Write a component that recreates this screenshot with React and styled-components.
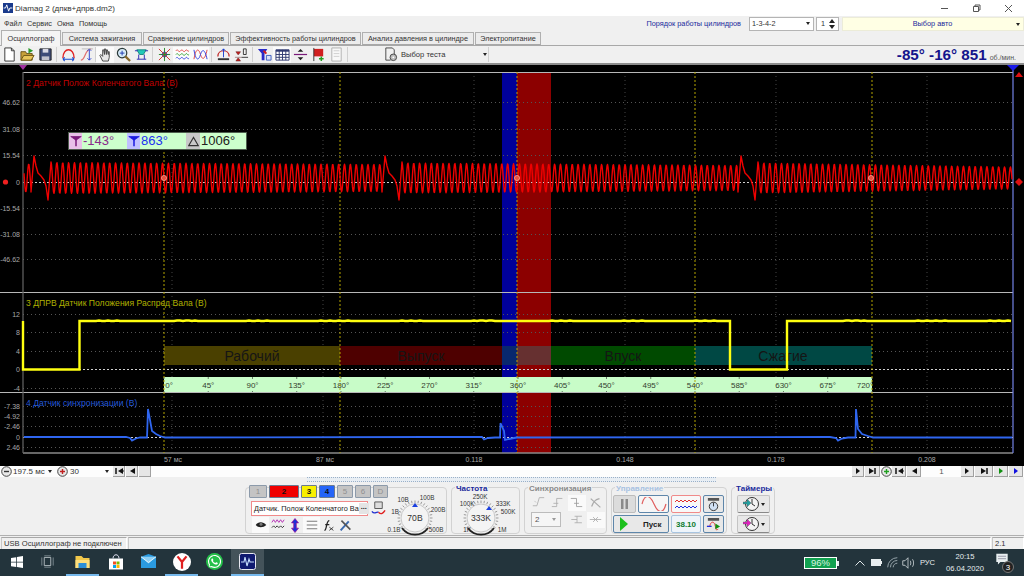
import React from 'react';
import styled, { createGlobalStyle } from 'styled-components';
import { FaWhatsapp } from 'react-icons/fa';

const GlobalStyle = createGlobalStyle`
  html, body { margin: 0; padding: 0; background: #f0f0f0; }
  body { font-family: "Liberation Sans", Arial, sans-serif; font-size: 7.3px; color: #222; overflow: hidden; }
  * { box-sizing: border-box; }
`;

// ---- waveforms ----
const GAPS = [
  { g: 34, a0: 15.5, a1: 13.5, len: 334 },
  { g: 385, a0: 15, a1: 12.5, len: 339 },
  { g: 741, a0: 15, a1: 11, len: 255 },
];

function gapShape(g) {
  return [[g - 3, 192], [g, 156], [g + 2, 166], [g + 4, 173], [g + 7, 176], [g + 10, 180], [g + 12, 186], [g + 14, 200], [g + 17, 162]];
}

function crankPath() {
  const pts = [];
  const segment = (from, to, start, a0, a1, len) => {
    for (let x = from; x <= to; x += 0.5) {
      const t = Math.min(1, Math.max(0, (x - start) / len));
      const amp = a0 + (a1 - a0) * t;
      const y = 178 - amp * Math.cos((2 * Math.PI * (x - start)) / 5.87);
      pts.push([x, y]);
    }
  };
  segment(24, 31, 34 + 17 - 351, 14, 14, 300);
  GAPS.forEach((gap, i) => {
    pts.push(...gapShape(gap.g));
    const end = i < GAPS.length - 1 ? GAPS[i + 1].g - 4 : 1012;
    segment(gap.g + 17.5, end, gap.g + 17, gap.a0, gap.a1, gap.len);
  });
  return 'M' + pts.map(([x, y]) => `${x} ${y.toFixed(1)}`).join('L');
}

function camPath() {
  const pts = [[23, 321], [23, 369.5], [79.5, 369.5], [79.5, 321]];
  const noisy = (from, to) => {
    for (let x = from; x < to; x += 3) {
      pts.push([x, 321 + (Math.sin(x * 1.7) * Math.sin(x * 0.31) > 0.6 ? -0.5 : 0)]);
    }
  };
  noisy(81, 729);
  pts.push([730, 321], [730, 369.5], [787, 369.5], [787, 321]);
  noisy(789, 1012);
  return 'M' + pts.map(([x, y]) => `${x} ${y}`).join('L');
}

const SYNC_PATH =
  'M24 437L126 437L130 438L132 440.5L136 438.5L140 437.5L147 437.5L148 409L150 420L152 431L156 434L160 436L165 437.5' +
  'L428 437L482 437L484 439.5L488 438L495 437.5L500 437.5L500.5 423L504 431L505 440L509 439L514 438L517 437.5' +
  'L830 437L836 438L838 440.5L842 438.5L848 437.5L855.5 437.5L856 409L858 429L862 434L868 436L873 437.5L1012 437.5';

const PHASES = [
  { x: 164, w: 176, c: '#4a4000', label: 'Рабочий', tx: 252 },
  { x: 340, w: 162, c: '#4e0000', label: 'Выпуск', tx: 421 },
  { x: 502, w: 15, c: '#08286e', label: '' },
  { x: 517, w: 34, c: '#663030', label: '' },
  { x: 551, w: 144, c: '#004a00', label: 'Впуск', tx: 623 },
  { x: 695, w: 177, c: '#004844', label: 'Сжатие', tx: 783 },
];

const Y_LABELS = [
  [102, '46.62'], [129, '31.08'], [155, '15.54'], [182, '0'], [208, '-15.54'], [234, '-31.08'], [259, '-46.62'],
  [314, '12'], [332, '8'], [351, '4'], [369, '0'], [388, '-4'],
  [406, '-7.38'], [416, '-4.92'], [426, '-2.46'], [437, '0'], [447, '2.46'],
];
const DIM_H = [102, 129, 155, 208, 234, 259, 314, 332, 351, 388, 406, 416, 426, 447];
const ZERO_H = [182, 369, 437];
const GRID_V = [172, 323, 474, 625, 776, 927];
const TIME_LABELS = [[173, '57 мс'], [325, '87 мс'], [474, '0.118'], [625, '0.148'], [776, '0.178'], [927, '0.208']];
const CURSORS = [164, 340, 517, 695, 872];
const DEGREES = Array.from({ length: 17 }, (_, i) => i * 45);

// ---- layout ----
const Page = styled.div`
  width: 1024px;
  height: 576px;
  display: flex;
  flex-direction: column;
  background: #f0f0f0;
  overflow: hidden;
`;

const TitleBar = styled.div`
  height: 16px;
  background: #fff;
  display: flex;
  align-items: center;
  padding-left: 3px;
  font-size: 8.1px;
  color: #333;
  gap: 2px;
`;

const WinControls = styled.div`
  margin-left: auto;
  display: flex;
`;

const WinButton = styled.div`
  width: 32px;
  height: 16px;
  display: flex;
  align-items: center;
  justify-content: center;
`;

const MenuBar = styled.div`
  height: 15px;
  display: flex;
  align-items: center;
  padding-left: 4px;
  gap: 5px;
  color: #333;
`;

const CylLabel = styled.span`
  margin-left: auto;
  color: #1a2a9c;
  margin-right: 3px;
`;

const Combo = styled.div`
  width: ${(p) => p.$w}px;
  height: 14px;
  background: ${(p) => p.$bg || '#fff'};
  border: 1px solid ${(p) => p.$border || '#b4b4b4'};
  display: flex;
  align-items: center;
  padding: 0 3px 0 2px;
  margin-right: ${(p) => p.$mr || 0}px;
  color: ${(p) => p.$color || '#333'};
  justify-content: ${(p) => (p.$center ? 'center' : 'space-between')};
  position: relative;
`;

const Caret = styled.i`
  width: 0;
  height: 0;
  border-left: 2.5px solid transparent;
  border-right: 2.5px solid transparent;
  border-top: 3px solid #222;
`;

const ComboCaret = styled(Caret)`
  position: absolute;
  right: 3px;
  top: 5px;
`;

const Tabs = styled.div`
  height: 15px;
  display: flex;
  align-items: flex-end;
  padding-left: 1px;
  gap: 1px;
  border-bottom: 1px solid #a8a8a8;
`;

const Tab = styled.div`
  width: ${(p) => p.$w}px;
  height: ${(p) => (p.$active ? 16 : 13)}px;
  margin-bottom: ${(p) => (p.$active ? -1 : 0)}px;
  background: ${(p) => (p.$active ? '#f4f4f4' : '#ececec')};
  border: 1px solid #b0b0b0;
  border-bottom: ${(p) => (p.$active ? 'none' : '1px solid #a8a8a8')};
  display: flex;
  align-items: center;
  justify-content: center;
  color: #333;
  white-space: nowrap;
`;

const Toolbar = styled.div`
  height: 19px;
  display: flex;
  align-items: center;
  background: #f0f0f0;
  border-bottom: 2px solid #8c8c8c;
`;

const ToolBtn = styled.div`
  width: 18px;
  height: 16px;
  display: flex;
  align-items: center;
  justify-content: center;
  background: ${(p) => (p.$on ? '#fbfbfb' : 'transparent')};
`;

const ToolSep = styled.div`
  width: ${(p) => p.$w || 5}px;
  height: 15px;
  display: flex;
  justify-content: center;
  &::after { content: ''; width: 1px; background: #d0d0d0; }
`;

const TestPicker = styled.div`
  width: 138px;
  height: 16px;
  display: flex;
  align-items: center;
  padding-left: 33px;
  gap: 3px;
  color: #333;
  font-size: 7.6px;
  white-space: nowrap;
  ${Caret} { margin-left: 35px; }
`;

const Rpm = styled.div`
  margin-left: auto;
  padding-right: 8px;
  display: flex;
  align-items: baseline;
  color: #14148c;
  font-weight: bold;
  font-size: 15.2px;
  white-space: pre;
`;

const RpmUnit = styled.span`
  font-size: 7px;
  font-weight: normal;
  color: #555;
  margin-left: 3px;
`;

const Scope = styled.div`
  height: 401px;
  background: #000;
  position: relative;
  flex: none;
`;

const ScopeSvg = styled.svg`
  display: block;
`;

const AxisText = styled.text`
  font-family: "Liberation Sans", Arial, sans-serif;
  font-size: 7px;
  fill: #a8a8a8;
`;

const ChannelTitle = styled.text`
  font-family: "Liberation Sans", Arial, sans-serif;
  font-size: 8.6px;
  fill: ${(p) => p.$c};
`;

const PhaseText = styled.text`
  font-family: "Liberation Sans", Arial, sans-serif;
  font-size: 14px;
  fill: #151515;
  text-anchor: middle;
`;

const RulerText = styled.text`
  font-family: "Liberation Sans", Arial, sans-serif;
  font-size: 8px;
  fill: #33402f;
  text-anchor: middle;
`;

const Readout = styled.div`
  position: absolute;
  left: 68px;
  top: 67px;
  width: 179px;
  height: 18px;
  background: #ccffcc;
  border: 1px solid #4e5e4e;
  display: flex;
  font-size: 13px;
`;

const ReadIcon = styled.div`
  width: ${(p) => p.$w}px;
  background: ${(p) => p.$bg};
  display: flex;
  align-items: center;
  justify-content: center;
  flex: none;
`;

const ReadValue = styled.div`
  width: ${(p) => p.$w}px;
  color: ${(p) => p.$c};
  line-height: 16px;
  padding-left: 1px;
  flex: none;
`;

const NavRow = styled.div`
  height: 11px;
  background: #fdfdfd;
  display: flex;
  align-items: center;
  font-size: 8px;
  color: #333;
  flex: none;
`;

const NavField = styled.div`
  width: ${(p) => p.$w}px;
  display: flex;
  align-items: center;
  justify-content: space-between;
  padding: 0 4px 0 1px;
  white-space: nowrap;
`;

const NavBtn = styled.div`
  width: ${(p) => p.$w || 12}px;
  height: 11px;
  background: #e6e6e6;
  border-right: 1px solid #a0a0a0;
  border-bottom: 1px solid #a0a0a0;
  display: flex;
  align-items: center;
  justify-content: center;
  margin-right: 1px;
`;

const NavCircle = styled.div`
  width: ${(p) => p.$w || 12}px;
  display: flex;
  align-items: center;
  justify-content: center;
`;

const PageNo = styled.div`
  width: 39px;
  text-align: center;
  color: #555;
`;

const Push = styled.div`
  margin-left: auto;
`;

const Splitter = styled.div`
  height: 4px;
  flex: none;
  padding-left: 307px;
  &::after {
    content: '';
    display: block;
    width: 409px;
    height: 3px;
    background: #e8eef4;
    border: 1px dotted #9ab0c8;
    border-width: 1px 0;
  }
`;

const Panel = styled.div`
  height: 55px;
  flex: none;
  display: flex;
  gap: 4px;
  padding: 6px 0 1px 245px;
  border-bottom: 1px solid #b0b0b0;
`;

const Group = styled.div`
  width: ${(p) => p.$w}px;
  border: 1px solid #d2d2d2;
  border-radius: 4px;
  position: relative;
  display: flex;
`;

const GroupTitle = styled.span`
  position: absolute;
  left: 3px;
  top: -4px;
  padding: 0 1px;
  background: #f0f0f0;
  font-weight: bold;
  font-size: 8px;
  line-height: 9px;
  color: ${(p) => p.$c};
  white-space: nowrap;
`;

const ChanColumn = styled.div`
  width: 143px;
  padding-left: 3px;
  margin-top: -3px;
  display: flex;
  flex-direction: column;
  flex: none;
`;

const ChanRow = styled.div`
  display: flex;
  gap: 2px;
  height: 13px;
`;

const ChanBtn = styled.div`
  width: ${(p) => p.$w}px;
  height: 13px;
  background: ${(p) => p.$bg || '#c4c4c4'};
  border: 1px solid ${(p) => (p.$bg ? '#6a7a90' : '#8c9aaa')};
  border-radius: 1px;
  color: ${(p) => (p.$bg ? '#101010' : '#909090')};
  font-weight: ${(p) => (p.$bg ? 'bold' : 'normal')};
  display: flex;
  align-items: center;
  justify-content: center;
  font-size: 8px;
`;

const SensorRow = styled.div`
  display: flex;
  align-items: center;
  height: 15px;
  margin: 3px 0 1px 2px;
  gap: 3px;
`;

const SensorInput = styled.div`
  width: 117px;
  height: 15px;
  background: #fff;
  border: 1px solid #f08a8a;
  display: flex;
  align-items: center;
  justify-content: space-between;
  padding-left: 2px;
  font-size: 7.3px;
  color: #222;
  white-space: nowrap;
`;

const DotsBtn = styled.div`
  width: 10px;
  height: 11px;
  margin-right: 1px;
  background: #e4e4e4;
  line-height: 7px;
  text-align: center;
  font-weight: bold;
  flex: none;
`;

const IconRow = styled.div`
  display: flex;
  align-items: center;
  height: 16px;
  padding-left: 3px;
`;

const SmallBtn = styled.div`
  width: ${(p) => p.$w || 17}px;
  height: 16px;
  display: flex;
  align-items: center;
  justify-content: center;
  background: ${(p) => (p.$on ? '#fafafa' : 'transparent')};
`;

const KnobSvg = styled.svg`
  margin-left: ${(p) => p.$ml || 0}px;
  display: block;
  flex: none;
  overflow: visible;
`;

const KnobLabel = styled.text`
  font-family: "Liberation Sans", Arial, sans-serif;
  font-size: 6.3px;
  fill: #333;
  text-anchor: middle;
`;

const KnobCenter = styled(KnobLabel)`
  font-size: 8.6px;
`;

const SyncGrid = styled.div`
  display: grid;
  grid-template-columns: repeat(4, 19px);
  grid-template-rows: 17px 17px;
  padding: 6px 0 0 4px;
  align-items: center;
  justify-items: center;
`;

const SyncSelect = styled.div`
  grid-column: span 2;
  justify-self: start;
  margin-left: 2px;
  width: 30px;
  height: 15px;
  background: #f6f6f6;
  border: 1px solid #bcbcbc;
  display: flex;
  align-items: center;
  justify-content: space-between;
  padding: 0 4px 0 3px;
  font-size: 8px;
  color: #555;
  ${Caret} { border-top-color: #999; }
`;

const CtlGrid = styled.div`
  display: grid;
  grid-template-columns: 23px 31px 30px 21px;
  grid-template-rows: 18px 18px;
  column-gap: 2px;
  row-gap: 2px;
  padding: 7px 0 0 1px;
`;

const CtlBtn = styled.div`
  grid-column: ${(p) => p.$span || 'auto'};
  background: ${(p) => p.$bg || '#e8e8e8'};
  border: ${(p) => p.$bw || 1}px solid ${(p) => p.$border || '#bcbcbc'};
  border-radius: 2px;
  display: flex;
  align-items: center;
  justify-content: center;
  font-weight: ${(p) => (p.$bold ? 'bold' : 'normal')};
  font-size: 8px;
  color: ${(p) => p.$c || '#222'};
  overflow: hidden;
`;

const StartBtn = styled(CtlBtn)`
  justify-content: flex-start;
  padding-left: 5px;
  gap: 14px;
`;

const TimerColumn = styled.div`
  display: flex;
  flex-direction: column;
  gap: 2px;
  padding: 7px 0 0 5px;
`;

const TimerBtn = styled.div`
  width: 33px;
  height: 18px;
  background: #e8e8e8;
  border: 1px solid #c4c4c4;
  border-bottom-color: #888;
  border-radius: 2px;
  display: flex;
  align-items: center;
  justify-content: center;
  gap: 2px;
`;

const StatusBar = styled.div`
  height: 12px;
  flex: none;
  display: flex;
  gap: 1px;
  padding: 0 0 0 1px;
  font-size: 7.6px;
  margin-top: 1px;
  color: #333;
`;

const StatusCell = styled.div`
  width: ${(p) => p.$w}px;
  border-top: 1px solid #a8a8a8;
  border-left: 1px solid #c8c8c8;
  border-right: 1px solid #fff;
  padding-left: 2px;
  line-height: 11px;
  white-space: nowrap;
`;

const Taskbar = styled.div`
  height: 27px;
  flex: none;
  background: #23343c;
  display: flex;
  align-items: stretch;
  color: #e8eef0;
  font-size: 7.6px;
`;

const TaskItem = styled.div`
  width: 33px;
  flex: none;
  display: flex;
  align-items: center;
  justify-content: center;
  background: ${(p) => (p.$active ? '#44535a' : 'transparent')};
  border-bottom: 2px solid ${(p) => (p.$mark ? '#76b9ed' : 'transparent')};
  margin-left: ${(p) => p.$ml || 0}px;
`;

const WhatsappIcon = styled(FaWhatsapp)`
  background: #25c04a;
  border-radius: 50%;
  padding: 1px;
`;

const TrayGroup = styled.div`
  margin-left: auto;
  margin-right: 7px;
  display: flex;
  align-items: center;
`;

const BatteryBadge = styled.div`
  width: 33px;
  height: 12px;
  background: #12a150;
  border: 1px solid #fff;
  color: #d8f4e2;
  font-size: 9.5px;
  line-height: 10px;
  text-align: center;
  position: relative;
  margin-right: 15px;
  &::after {
    content: '';
    position: absolute;
    right: -3px;
    top: 3px;
    width: 2px;
    height: 5px;
    background: #e8eef0;
  }
`;

const TrayIcon = styled.div`
  width: 16px;
  display: flex;
  justify-content: center;
`;

const Lang = styled.div`
  width: 17px;
  margin: 0 8px 0 3px;
  text-align: center;
  white-space: nowrap;
`;

const Clock = styled.div`
  width: 42px;
  text-align: center;
  line-height: 12px;
`;

const Notify = styled.div`
  width: 30px;
  margin-left: 1px;
  position: relative;
  height: 20px;
  display: flex;
  justify-content: center;
`;

const NotifyCount = styled.span`
  position: absolute;
  right: 3px;
  top: 8px;
  width: 12px;
  height: 12px;
  line-height: 11px;
  border-radius: 50%;
  background: #222;
  border: 1px solid #777;
  color: #fff;
  text-align: center;
  font-size: 8px;
`;

// ---- drawings ----
const Ico = ({ w = 15, h = 15, vb = '0 0 16 16', children }) => (
  <svg width={w} height={h} viewBox={vb} fill="none">{children}</svg>
);

const TOOL_ICONS = {
  doc: <><path d="M3 1h7l3 3v11H3z" fill="#fff" stroke="#333" /><path d="M10 1v3h3" stroke="#333" /></>,
  open: <><path d="M1 14V5h5l1 2h6v7z" fill="#c9a23a" stroke="#6a5314" /><path d="M1 14l3-5h11l-3 5z" fill="#e8c65a" stroke="#6a5314" /><path d="M9 1l5 3-5 3z" fill="#2c9a2c" /></>,
  save: <><path d="M2 2h12v12H2z" fill="#3c4a78" stroke="#222" /><path d="M5 2h6v4H5z" fill="#d8d8e4" /><path d="M4 10h8v4H4z" fill="#c0c0cc" /></>,
  arc: <><path d="M2 12C2 0 14 0 14 12" stroke="#e02020" strokeWidth="1.5" /><path d="M2 13h12M2 13l2-2M2 13l2 2M14 13l-2-2M14 13l-2 2" stroke="#1a4fd0" strokeWidth="1.2" /></>,
  arcV: <><path d="M2 14C7 14 6 2 13 2" stroke="#e07070" strokeWidth="1.3" /><path d="M11 2v12M11 2L9 4M11 2l2 2M11 14l-2-2M11 14l2-2" stroke="#2a3fd0" /><path d="M3 2h12" stroke="#bbb" /></>,
  hand: <path d="M5 15L2 9l1-1 2 2V3l1 0 1 5V2h1l1 6V3h1l1 5V5h1v6l-1 4z" fill="#e8e8e8" stroke="#444" />,
  zoom: <><circle cx="6.5" cy="6.5" r="5" fill="#d8ecf8" stroke="#2a3a3a" strokeWidth="1.3" /><path d="M10 10l5 5" stroke="#8a6a2a" strokeWidth="2.4" /><path d="M4 6.5h5M6.5 4v5" stroke="#1c3ab0" /></>,
  teal: <><path d="M3 3h10L10 8H6z" fill="#22c8b8" stroke="#1a8a80" /><path d="M1 4h3M12 4h3M3 13h10" stroke="#2a2ab0" /><path d="M5 8v5M11 8v5" stroke="#2a2ab0" /></>,
  cross: <><path d="M2 2l12 12M14 2L2 14" stroke="#d03030" /><path d="M8 1v14" stroke="#2a8a2a" /><path d="M2 8h12" stroke="#2a8a2a" /><path d="M5 8l3-3 3 3-3 3z" stroke="#2a2a90" /></>,
  waves: <><path d="M1 4c2-3 3 3 5 0s3 3 5 0 2 2 4 0" stroke="#e04040" /><path d="M1 8c2-3 3 3 5 0s3 3 5 0 2 2 4 0" stroke="#30a030" /><path d="M1 12c2-3 3 3 5 0s3 3 5 0 2 2 4 0" stroke="#3040e0" /></>,
  loops: <><path d="M1 13C3 1 6 1 8 8s5 5 7-5" stroke="#e04040" /><path d="M1 3c2 12 5 12 7 5s5-5 7 5" stroke="#3040e0" /></>,
  auto: <><path d="M2 10C2 2 14 2 14 10" stroke="#c02020" strokeWidth="1.3" /><path d="M8 2v9M6 4l2-2 2 2" stroke="#1a3fd0" /><path d="M2 13h12" stroke="#333" strokeWidth="2" /></>,
  zero: <><path d="M1 11h7M4 8l-2-3h5l-2 3zM4 12l-2 3h5l-2-3z" fill="#c02020" stroke="#602020" strokeWidth=".5" /><path d="M8 11h7" stroke="#333" /><path d="M10 2h3v6h-3z" stroke="#333" /></>,
  filter: <><path d="M1 2h10L8 7v7H5V7z" fill="#2a2ac8" /><path d="M7 4l3 3" stroke="#d02020" strokeWidth="2" /><path d="M10 9h5v5h-5z" stroke="#4060c0" fill="#d8e0f8" /></>,
  table: <><path d="M1 3h14v11H1z" fill="#fff" stroke="#303a70" /><path d="M1 3h14v2H1z" fill="#303a70" /><path d="M4.5 3v11M8 3v11M11.5 3v11M1 8h14M1 11h14" stroke="#303a70" /></>,
  divide: <><path d="M1 8h14" stroke="#7a1a7a" strokeWidth="1.3" /><path d="M5 5h6L8 2zM5 11h6l-3 3z" fill="#222" /></>,
  flag: <><path d="M3 2h10v8H3z" fill="#d02020" /><path d="M3 1v14" stroke="#333" /><path d="M11 10v5M8.5 12.5h5" stroke="#22a022" strokeWidth="1.6" /></>,
  page: <><path d="M3 1h10v14H3z" fill="#f8f8f8" stroke="#b0b0b0" /><path d="M5 4h6M5 7h6M5 10h6" stroke="#cfcfcf" /></>,
};

const TOOLS = [
  ['doc'], ['open'], ['save'], 'sep',
  ['arc'], ['arcV'], 'thin',
  ['hand', true], ['zoom'], ['teal'], 'sep',
  ['cross'], ['waves', true], ['loops', true], 'sep',
  ['auto'], ['zero'], 'sep',
  ['filter'], ['table', true], ['divide'], ['flag'], ['page'], 'sep',
];

const TriMark = ({ c }) => (
  <Ico w={12} h={14}><path d="M1 2h14L8 7z" fill={c} stroke={c} /><path d="M8 5v10" stroke={c} strokeWidth="2" /></Ico>
);

const Nav = ({ kind, c = '#111' }) => {
  const paths = {
    first: <><path d="M2 1v6" stroke={c} strokeWidth="1.5" /><path d="M4 4l5-3v6z" fill={c} /><path d="M8 4h2" stroke={c} /></>,
    prev: <path d="M3 4l5-3v6z" fill={c} />,
    next: <path d="M3 1l4 3-4 3z" fill={c} />,
    last: <><path d="M2 1l5 3-5 3z" fill={c} /><path d="M8 1v6" stroke={c} strokeWidth="1.5" /></>,
  };
  return <svg width="10" height="8" viewBox="0 0 10 8">{paths[kind]}</svg>;
};

const PlusMinus = ({ plus, c }) => (
  <svg width="11" height="11" viewBox="0 0 11 11">
    <circle cx="5.5" cy="5.5" r="4.8" fill="#e8e8e8" stroke="#444" />
    <path d={plus ? 'M3 5.5h5M5.5 3v5' : 'M3 5.5h5'} stroke={c} strokeWidth="1.4" />
  </svg>
);

function Knob({ labels, center, marker, cx, width, ml }) {
  const cy = 30;
  const ticks = Array.from({ length: 25 }, (_, i) => {
    const a = ((135 + i * 11.25) * Math.PI) / 180;
    return (
      <path key={i} d={`M${cx + 15 * Math.cos(a)} ${cy + 15 * Math.sin(a)}L${cx + 17.5 * Math.cos(a)} ${cy + 17.5 * Math.sin(a)}`} stroke="#9a9a9a" />
    );
  });
  const m = (marker * Math.PI) / 180;
  const mx = cx + 12 * Math.cos(m);
  const my = cy + 12 * Math.sin(m);
  return (
    <KnobSvg $ml={ml} width={width} height={47} viewBox={`0 0 ${width} 47`}>
      {ticks}
      <circle cx={cx} cy={cy} r="14" fill="#f4f4f4" stroke="#c8c8c8" />
      <path d={`M${cx - 13} ${cy + 10}A16 16 0 0 0 ${cx + 13} ${cy + 10}`} fill="none" stroke="#222" strokeWidth="1.8" />
      <path d={`M${mx} ${my - 3}l3 4h-6z`} fill="#1a3fe0" />
      {labels.map(([x, y, t]) => (
        <KnobLabel key={t} x={x} y={y}>{t}</KnobLabel>
      ))}
      <KnobCenter x={cx} y={cy + 3}>{center}</KnobCenter>
    </KnobSvg>
  );
}

const Clk = ({ c }) => (
  <Ico w={16} h={16}>
    <circle cx="9" cy="8" r="6.5" fill="#f4f4f4" stroke="#333" />
    <path d="M9 8V3M9 8l3 2" stroke="#333" />
    <path d="M0 6h4V3l4 4-4 4V8H0z" fill={c} stroke="#555" strokeWidth=".4" />
  </Ico>
);

function ScopeCanvas() {
  return (
    <ScopeSvg width="1024" height="401" viewBox="0 65 1024 401">
      <rect x="502" y="72" width="15" height="381" fill="#00009a" />
      <rect x="517" y="72" width="34" height="381" fill="#8c0000" />

      {GRID_V.map((x) => <path key={x} d={`M${x} 72V453`} stroke="#444" strokeDasharray="1 3" />)}
      {DIM_H.map((y) => <path key={y} d={`M23 ${y + 0.5}H1013`} stroke="#555" strokeDasharray="1 3" />)}
      {ZERO_H.map((y) => <path key={y} d={`M23 ${y + 0.5}H1013`} stroke="#cfcfcf" strokeDasharray="2 2" />)}

      {PHASES.map((p) => <rect key={p.x} x={p.x} y="346" width={p.w} height="19" fill={p.c} />)}
      {PHASES.filter((p) => p.label).map((p) => <PhaseText key={p.x} x={p.tx} y="361">{p.label}</PhaseText>)}

      <rect x="164" y="377" width="708" height="16" fill="#c8fcc8" />
      {DEGREES.map((d) => {
        const x = 164 + d * 0.9833;
        return (
          <g key={d}>
            <path d={`M${x} 377v2M${x} 391v2`} stroke="#667a66" />
            <RulerText x={d === 0 ? x + 5 : d === 720 ? x - 7 : x} y="388">{d}°</RulerText>
          </g>
        );
      })}

      <path d="M23 72.5H1013M0 292.5H1013M0 392.5H1013" stroke="#b8b8b8" />
      <path d="M23 453H1013" stroke="#8a8a8a" strokeWidth="1.4" />
      <path d="M23 72V453" stroke="#666" strokeWidth="1.2" />
      <path d="M1013 70V453" stroke="#7484e8" strokeWidth="1.2" />

      {CURSORS.map((x) => <path key={x} d={`M${x} 72V453`} stroke="#b4a400" strokeDasharray="2 2" />)}

      <path d={crankPath()} fill="none" stroke="#f00000" strokeWidth="1.4" strokeLinejoin="round" />
      <path d={camPath()} fill="none" stroke="#ffff10" strokeWidth="2.4" />
      <path d={SYNC_PATH} fill="none" stroke="#2f66f0" strokeWidth="1.8" />

      {[164, 517, 871].map((x) => <circle key={x} cx={x} cy="178" r="2.6" fill="#e85040" stroke="#ffb0a0" strokeWidth=".7" />)}

      <ChannelTitle $c="#c00000" x="26" y="86">2 Датчик Полож Коленчатого Вала (В)</ChannelTitle>
      <ChannelTitle $c="#b0b000" x="26" y="306">3 ДПРВ Датчик Положения Распред Вала (В)</ChannelTitle>
      <ChannelTitle $c="#2458d8" x="26" y="406">4 Датчик синхронизации (В)</ChannelTitle>

      {Y_LABELS.map(([y, t]) => <AxisText key={y} x="20" y={y + 2.5} textAnchor="end">{t}</AxisText>)}
      {TIME_LABELS.map(([x, t]) => <AxisText key={x} x={x} y="462" textAnchor="middle">{t}</AxisText>)}

      <circle cx="5.5" cy="182" r="2.6" fill="#f02020" />
      <path d="M1019 178l4 4-4 4-4-4z" fill="#e01010" />
      <path d="M1019 72l4 5h-8z" fill="#e01010" />
      <path d="M1007 65h12l-6 6z" fill="#1a1ae8" />
      <path d="M19 65h8l-4 5z" fill="#a030a0" />
    </ScopeSvg>
  );
}

const TAB_LIST = [
  ['Осциллограф', 60, true], ['Система зажигания', 80], ['Сравнение цилиндров', 86],
  ['Эффективность работы цилиндров', 131], ['Анализ давления в цилиндре', 112], ['Электропитание', 66],
];

const CHANNELS = [
  ['1', 18], ['2', 30, '#f00000'], ['3', 16, '#f8f000'], ['4', 16, '#2464f8'], ['5', 16], ['6', 16], ['D', 15],
];

function App() {
  return (
    <Page>
      <GlobalStyle />
      <TitleBar>
        <Ico w={10} h={10}>
          <rect width="16" height="16" fill="#1a3a8c" />
          <path d="M1 8h3l2-5 3 10 2-5h4" stroke="#fff" strokeWidth="1.5" />
        </Ico>
        <span>Diamag 2 (дпкв+дпрв.dm2)</span>
        <WinControls>
          <WinButton><svg width="9" height="9"><path d="M1 4.5h7" stroke="#555" /></svg></WinButton>
          <WinButton><svg width="9" height="9"><path d="M1.5 2.5h5v5h-5zM3 2.5V1h5v5H6.5" stroke="#555" fill="none" /></svg></WinButton>
          <WinButton><svg width="9" height="9"><path d="M1 1l7 7M8 1L1 8" stroke="#555" /></svg></WinButton>
        </WinControls>
      </TitleBar>

      <MenuBar>
        <span>Файл</span><span>Сервис</span><span>Окна</span><span>Помощь</span>
        <CylLabel>Порядок работы цилиндров</CylLabel>
        <Combo $w={65} $mr={-3}>1-3-4-2<Caret /></Combo>
        <Combo $w={23} $mr={-2}>
          <span>&nbsp;1</span>
          <svg width="6" height="10"><path d="M3 0l3 4H0zM3 10l3-4H0z" fill="#222" /></svg>
        </Combo>
        <Combo $w={182} $bg="#ffffe4" $border="#ececd8" $color="#1a2a9c" $center>
          Выбор авто<ComboCaret />
        </Combo>
      </MenuBar>

      <Tabs>
        {TAB_LIST.map(([t, w, a]) => <Tab key={t} $w={w} $active={a}>{t}</Tab>)}
      </Tabs>

      <Toolbar>
        {TOOLS.map((t, i) => {
          if (t === 'sep') return <ToolSep key={i} />;
          if (t === 'thin') return <ToolSep key={i} $w={1} />;
          return <ToolBtn key={i} $on={t[1]}><Ico>{TOOL_ICONS[t[0]]}</Ico></ToolBtn>;
        })}
        <TestPicker>
          <Ico w={15} h={15}>
            <path d="M3 1h7l2 2v5M3 1v13h5" stroke="#444" />
            <circle cx="11" cy="11" r="3.5" fill="#bbb" stroke="#444" />
            <circle cx="11" cy="11" r="1" fill="#fff" />
          </Ico>
          <span>Выбор теста</span>
          <Caret />
        </TestPicker>
        <ToolSep $w={1} />
        <Rpm>-85° -16° 851<RpmUnit>об./мин.</RpmUnit></Rpm>
      </Toolbar>

      <Scope>
        <ScopeCanvas />
        <Readout>
          <ReadIcon $w={13} $bg="#e8c0e8"><TriMark c="#7a1a7a" /></ReadIcon>
          <ReadValue $w={45} $c="#8a2a8a">-143°</ReadValue>
          <ReadIcon $w={13} $bg="#c0c0ff"><TriMark c="#1a1ae0" /></ReadIcon>
          <ReadValue $w={46} $c="#2030f0">863°</ReadValue>
          <ReadIcon $w={14} $bg="#c8c8c8">
            <Ico w={11} h={11}><path d="M8 2l7 12H1z" stroke="#333" strokeWidth="1.5" /></Ico>
          </ReadIcon>
          <ReadValue $w={46} $c="#202020">1006°</ReadValue>
        </Readout>
      </Scope>

      <NavRow>
        <NavCircle><PlusMinus c="#333" /></NavCircle>
        <NavField $w={44}>197.5 мс<Caret /></NavField>
        <NavCircle $w={13}><PlusMinus plus c="#c02020" /></NavCircle>
        <NavField $w={44}>30<Caret /></NavField>
        <NavBtn><Nav kind="first" /></NavBtn>
        <NavBtn><Nav kind="prev" /></NavBtn>
        <NavBtn />
        <Push />
        <NavBtn><Nav kind="next" /></NavBtn>
        <NavBtn $w={15}><Nav kind="last" /></NavBtn>
        <NavCircle $w={11}><PlusMinus plus c="#20a020" /></NavCircle>
        <NavBtn $w={14}><Nav kind="first" /></NavBtn>
        <NavBtn $w={14}><Nav kind="prev" /></NavBtn>
        <PageNo>1</PageNo>
        <NavBtn $w={13}><Nav kind="next" /></NavBtn>
        <NavBtn $w={18}><Nav kind="last" /></NavBtn>
        <NavBtn $w={14}><Nav kind="next" c="#109010" /></NavBtn>
        <NavBtn $w={14}><Nav kind="next" c="#1010e0" /></NavBtn>
      </NavRow>
      <Splitter />

      <Panel>
        <Group $w={202}>
          <ChanColumn>
            <ChanRow>
              {CHANNELS.map(([t, w, bg]) => <ChanBtn key={t} $w={w} $bg={bg}>{t}</ChanBtn>)}
            </ChanRow>
            <SensorRow>
              <SensorInput><span>Датчик. Полож Коленчатого Ва</span><DotsBtn>...</DotsBtn></SensorInput>
              <Ico w={15} h={15}>
                <path d="M4 1h8v7H4z" fill="#ddd" stroke="#555" />
                <path d="M1 11c3 4 4 0 7 1" stroke="#2030d0" strokeWidth="1.5" />
                <path d="M8 12c3 3 5 1 7-2" stroke="#e02020" strokeWidth="1.5" />
              </Ico>
            </SensorRow>
            <IconRow>
              <SmallBtn $on>
                <Ico w={12} h={12}><path d="M1 8c3-5 10-5 14 0-4 4-11 4-14 0z" fill="#222" /><circle cx="8" cy="7" r="2" fill="#777" /></Ico>
              </SmallBtn>
              <SmallBtn>
                <Ico w={14} h={14}><path d="M1 5l2-3 2 3 2-3 2 3 2-3 2 3 2-3" stroke="#b020b0" /><path d="M1 11l2-2 2 2 2-2 2 2 2-2 2 2 2-2" stroke="#222" /></Ico>
              </SmallBtn>
              <SmallBtn>
                <Ico w={14} h={15}><path d="M8 0l4 5H9.5v6H12l-4 5-4-5h2.5V5H4z" fill="#2030d8" stroke="#a01090" strokeWidth=".8" /></Ico>
              </SmallBtn>
              <SmallBtn $on>
                <Ico w={14} h={12}><path d="M1 3h14M1 8h14M1 13h14" stroke="#777" strokeWidth="1.3" /></Ico>
              </SmallBtn>
              <SmallBtn>
                <Ico w={13} h={13}><path d="M3 14c3 0 2-12 6-12M4 7h5" stroke="#222" strokeWidth="1.6" /><path d="M9 10l5 4M14 10l-5 4" stroke="#222" /></Ico>
              </SmallBtn>
              <SmallBtn>
                <Ico w={13} h={13}><path d="M2 14L12 3" stroke="#3a6ab0" strokeWidth="2.4" /><path d="M3 2l11 11" stroke="#555" strokeWidth="2" /></Ico>
              </SmallBtn>
            </IconRow>
          </ChanColumn>
          <Knob
            ml={-6}
            cx={32}
            width={62}
            center="70B"
            marker={-90}
            labels={[[20, 13.5, '10В'], [44, 11.5, '100В'], [55, 23.5, '200В'], [12, 25.5, '1В'], [11, 43.5, '0.1В'], [53, 43.5, '500В']]}
          />
        </Group>

        <Group $w={69}>
          <GroupTitle $c="#1a2a9c">Частота</GroupTitle>
          <Knob
            cx={29}
            width={67}
            center="333K"
            marker={-48}
            labels={[[28, 10.5, '250K'], [15, 17.5, '100K'], [51, 17.5, '333K'], [56, 25.5, '500K'], [15, 43.5, '1K'], [50, 43.5, '1M']]}
          />
        </Group>

        <Group $w={83}>
          <GroupTitle $c="#8a8a8a">Синхронизация</GroupTitle>
          <SyncGrid>
            <Ico w={13} h={13}><path d="M1 12h5l3-10h6" stroke="#aaa" /><path d="M3 6l2 2" stroke="#bbb" /></Ico>
            <Ico w={13} h={13}><path d="M1 13h6V3h7M3 9h6" stroke="#aaa" /></Ico>
            <SmallBtn $on $w={18}><Ico w={13} h={13}><path d="M1 3h7v10h7M5 9h6" stroke="#999" /></Ico></SmallBtn>
            <Ico w={14} h={14}><path d="M2 3l11 10M3 12c3-8 6-8 9-9" stroke="#aaa" strokeWidth="1.4" /></Ico>
            <SyncSelect>2<Caret /></SyncSelect>
            <Ico w={14} h={13}><path d="M1 8h7M5 4h9M5 12h9M8 4v8" stroke="#aaa" /></Ico>
            <SmallBtn $on $w={18}><Ico w={13} h={13}><path d="M1 8h14M5 5l3 3-3 3M11 5L8 8l3 3" stroke="#aaa" /></Ico></SmallBtn>
          </SyncGrid>
        </Group>

        <Group $w={116}>
          <GroupTitle $c="#a8c2e2">Управление</GroupTitle>
          <CtlGrid>
            <CtlBtn $bg="#dcdcdc">
              <svg width="9" height="10"><path d="M1 0h2.5v10H1zM5.500 0H8v10H5.500z" fill="#8a8a8a" /></svg>
            </CtlBtn>
            <CtlBtn $bg="#f6f6f6" $border="#5e86aa" $bw={1.5}>
              <svg width="26" height="14"><path d="M1 7C4-4 9-2 13 7s9 11 12 0" fill="none" stroke="#e06060" strokeWidth="1.2" /></svg>
            </CtlBtn>
            <CtlBtn $bg="#f8f8f8" $border="#f08a8a" $bw={1.5}>
              <svg width="25" height="13"><path d="M1 4l2-2 2 2 2-2 2 2 2-2 2 2 2-2 2 2 2-2 2 2 2-2" fill="none" stroke="#e03030" /><path d="M1 10l2-2 2 2 2-2 2 2 2-2 2 2 2-2 2 2 2-2 2 2 2-2" fill="none" stroke="#2030e0" /></svg>
            </CtlBtn>
            <CtlBtn $border="#5e86aa">
              <Ico w={15} h={15}><path d="M2 1h12v3H2z" fill="#555" /><circle cx="8" cy="10" r="4.5" fill="#d0e0f4" stroke="#333" /><path d="M8 10V6" stroke="#333" /></Ico>
            </CtlBtn>
            <StartBtn $span="span 2" $border="#5e86aa" $bw={1.5} $bold>
              <svg width="10" height="14"><path d="M1 0l8 7-8 7z" fill="#1cc01c" /></svg>
              <span>Пуск</span>
            </StartBtn>
            <CtlBtn $bg="#eef4fa" $border="#a8c4e0" $bw={1.5} $c="#0c7c30" $bold>38.10</CtlBtn>
            <CtlBtn $border="#5e86aa">
              <Ico w={15} h={15}><path d="M2 1h12v3H2z" fill="#555" /><path d="M1 10h3c1-6 5-6 6 0s2 3 3 3" stroke="#e03030" /><path d="M1 10h5" stroke="#2030e0" strokeWidth="1.5" /><path d="M10 7l5 3-5 3z" fill="#109010" /></Ico>
            </CtlBtn>
          </CtlGrid>
        </Group>

        <Group $w={44}>
          <GroupTitle $c="#1a2a9c">Таймеры</GroupTitle>
          <TimerColumn>
            <TimerBtn><Clk c="#20a0a0" /><Caret /></TimerBtn>
            <TimerBtn><Clk c="#e020c0" /><Caret /></TimerBtn>
          </TimerColumn>
        </Group>
      </Panel>

      <StatusBar>
        <StatusCell $w={126}>USB Осциллограф не подключен</StatusCell>
        <StatusCell $w={863} />
        <StatusCell $w={32}>2.1</StatusCell>
      </StatusBar>

      <Taskbar>
        <TaskItem>
          <Ico w={12} h={12}><path d="M0 2.500l7-1v6H0zM8 1.300l8-1.300v7.500H8zM0 8.500h7v6l-7-1zM8 8.500h8V16l-8-1.300z" fill="#fff" /></Ico>
        </TaskItem>
        <TaskItem $ml={-2}>
          <Ico w={13} h={13}><path d="M4 3h8v10H4z" stroke="#c8d0d4" /><path d="M1 3v10M15 3v10M4 1h8M4 15h8" stroke="#8a989e" /></Ico>
        </TaskItem>
        <TaskItem $ml={2} $mark>
          <Ico w={17} h={16}><path d="M1 2h6l2 2h6v10H1z" fill="#f2c84b" /><path d="M1 6h14v8H1z" fill="#ffdf7c" /><path d="M4 9h8v5H4z" fill="#2c8fd8" /></Ico>
        </TaskItem>
        <TaskItem>
          <Ico w={16} h={17}><path d="M1 5h14v11H1z" fill="#fff" /><path d="M5 5c0-5 6-5 6 0" stroke="#dde" /><path d="M5 8h3v3H5z" fill="#f25022" /><path d="M8.5 8h3v3h-3z" fill="#7fba00" /><path d="M5 11.500h3v3H5z" fill="#00a4ef" /><path d="M8.500 11.500h3v3h-3z" fill="#ffb900" /></Ico>
        </TaskItem>
        <TaskItem>
          <Ico w={17} h={15}><path d="M0 3l8-3 8 3v12H0z" fill="#2a9ae0" /><path d="M0 3l8 7 8-7" fill="#8fd0f4" /><path d="M0 3l8 6 8-6" stroke="#e4f4fc" /></Ico>
        </TaskItem>
        <TaskItem $mark>
          <Ico w={18} h={18}><circle cx="8" cy="8" r="8" fill="#fff" /><path d="M4 3l4 5 4-5M8 8v6" stroke="#e02020" strokeWidth="2" /></Ico>
        </TaskItem>
        <TaskItem>
          <WhatsappIcon size={17} color="#fff" />
        </TaskItem>
        <TaskItem $active $mark>
          <svg width="17" height="17" viewBox="0 0 17 17">
            <rect x=".5" y=".5" width="16" height="16" rx="2" fill="#101a70" stroke="#e8e8f0" />
            <path d="M2 9h3l1-5 2 9 2-7 1 3h4" fill="none" stroke="#c8e0ff" strokeWidth="1.1" />
          </svg>
        </TaskItem>
        <TrayGroup>
          <BatteryBadge>96%</BatteryBadge>
          <TrayIcon><svg width="10" height="6"><path d="M.5 5.500L5 1l4.500 4.500" stroke="#dfe6e8" fill="none" /></svg></TrayIcon>
          <TrayIcon><svg width="11" height="7"><path d="M0 0h10v7H0z" fill="#e8eef0" /><path d="M10 2h1v3h-1z" fill="#e8eef0" /></svg></TrayIcon>
          <TrayIcon><Ico w={11} h={11}><path d="M1 15A14 14 0 0 1 15 1M5 15A10 10 0 0 1 15 5M9 15a6 6 0 0 1 6-6" stroke="#9aa8ae" strokeWidth="1.4" /></Ico></TrayIcon>
          <TrayIcon><Ico w={12} h={12}><path d="M1 5h3l4-4v14l-4-4H1z" stroke="#dfe6e8" /><path d="M11 5c1 2 1 4 0 6M14 3c2 3 2 7 0 10" stroke="#dfe6e8" /></Ico></TrayIcon>
          <Lang>РУС</Lang>
          <Clock>20:15<br />06.04.2020</Clock>
          <Notify>
            <Ico w={14} h={13}><path d="M1 1h14v10H6l-3 3v-3H1z" fill="#e8eef0" /><path d="M3 4h10M3 7h10" stroke="#889" /></Ico>
            <NotifyCount>3</NotifyCount>
          </Notify>
        </TrayGroup>
      </Taskbar>
    </Page>
  );
}

export default App;
